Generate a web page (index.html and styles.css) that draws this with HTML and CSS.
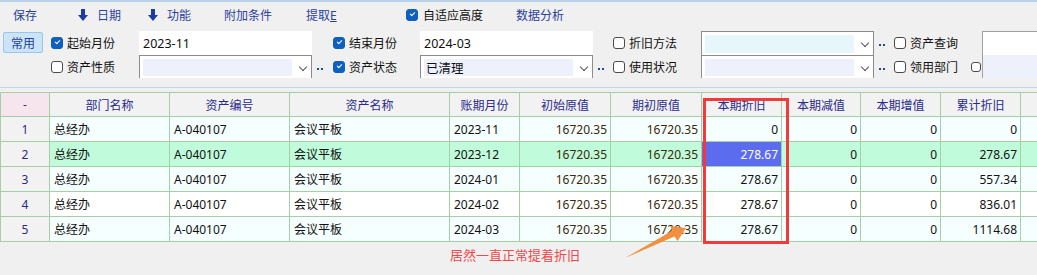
FILE: index.html
```html
<!DOCTYPE html>
<html lang="zh-CN">
<head>
    <meta charset="UTF-8">
    <title>资产折旧明细</title>
    <link rel="stylesheet" href="styles.css">
</head>
<body>
    <div class="top-line"></div>

    <div class="toolbar">
        <span class="tb w-save">保存</span>
        <span class="tb w-date"><svg class="down" viewBox="0 0 10 12"><path d="M3 0h4v6h3l-5 6-5-6h3z"/></svg>日期</span>
        <span class="tb w-func"><svg class="down" viewBox="0 0 10 12"><path d="M3 0h4v6h3l-5 6-5-6h3z"/></svg>功能</span>
        <span class="tb w-extra">附加条件</span>
        <span class="tb w-fetch">提取<u>E</u></span>
        <span class="tb w-auto"><span class="cb on"></span><span class="dark">自适应高度</span></span>
        <span class="tb">数据分析</span>
    </div>

    <div class="filters">
        <div class="cell"><button class="common">常用</button></div>
        <div class="cell"><label class="chk"><span class="cb on"></span>起始月份</label></div>
        <div class="cell"><div class="field plain">2023-11</div></div>
        <div class="cell"></div>
        <div class="cell"><label class="chk"><span class="cb on"></span>结束月份</label></div>
        <div class="cell"><div class="field plain">2024-03</div></div>
        <div class="cell"></div>
        <div class="cell"><label class="chk"><span class="cb"></span>折旧方法</label></div>
        <div class="cell"><div class="field combo"><span class="inner cyan"></span><span class="chev"></span></div></div>
        <div class="cell"><span class="dots"></span></div>
        <div class="cell"><label class="chk"><span class="cb"></span>资产查询</label></div>
        <div class="cell"></div>
        <div class="cell"><div class="field plain edge"></div></div>

        <div class="cell"></div>
        <div class="cell"><label class="chk"><span class="cb"></span>资产性质</label></div>
        <div class="cell"><div class="field combo"><span class="inner"></span><span class="chev"></span></div></div>
        <div class="cell"><span class="dots"></span></div>
        <div class="cell"><label class="chk"><span class="cb on"></span>资产状态</label></div>
        <div class="cell"><div class="field combo"><span class="inner">已清理</span><span class="chev"></span></div></div>
        <div class="cell"><span class="dots"></span></div>
        <div class="cell"><label class="chk"><span class="cb"></span>使用状况</label></div>
        <div class="cell"><div class="field combo"><span class="inner"></span><span class="chev"></span></div></div>
        <div class="cell"><span class="dots"></span></div>
        <div class="cell"><label class="chk"><span class="cb"></span>领用部门</label></div>
        <div class="cell"><span class="cb small"></span></div>
        <div class="cell"><div class="field plain edge lilac"></div></div>
    </div>

    <div class="sep-line"></div>

    <div class="grid-wrap">
        <table class="grid">
            <colgroup>
                <col style="width:49px">
                <col style="width:120px">
                <col style="width:120px">
                <col style="width:160px">
                <col style="width:70px">
                <col style="width:91px">
                <col style="width:91px">
                <col style="width:80px">
                <col style="width:79px">
                <col style="width:80px">
                <col style="width:80px">
                <col style="width:40px">
            </colgroup>
            <thead>
                <tr>
                    <th class="corner">-</th>
                    <th>部门名称</th>
                    <th>资产编号</th>
                    <th>资产名称</th>
                    <th>账期月份</th>
                    <th>初始原值</th>
                    <th>期初原值</th>
                    <th>本期折旧</th>
                    <th>本期减值</th>
                    <th>本期增值</th>
                    <th>累计折旧</th>
                    <th></th>
                </tr>
            </thead>
            <tbody>
                <tr class="odd">
                    <td class="no">1</td><td>总经办</td><td>A-040107</td><td>会议平板</td><td>2023-11</td>
                    <td class="num brown">16720.35</td><td class="num brown">16720.35</td><td class="num">0</td>
                    <td class="num">0</td><td class="num">0</td><td class="num">0</td><td></td>
                </tr>
                <tr class="current">
                    <td class="no">2</td><td>总经办</td><td>A-040107</td><td>会议平板</td><td>2023-12</td>
                    <td class="num brown">16720.35</td><td class="num brown">16720.35</td><td class="num focus">278.67</td>
                    <td class="num">0</td><td class="num">0</td><td class="num">278.67</td><td></td>
                </tr>
                <tr class="odd">
                    <td class="no">3</td><td>总经办</td><td>A-040107</td><td>会议平板</td><td>2024-01</td>
                    <td class="num brown">16720.35</td><td class="num brown">16720.35</td><td class="num">278.67</td>
                    <td class="num">0</td><td class="num">0</td><td class="num">557.34</td><td></td>
                </tr>
                <tr>
                    <td class="no">4</td><td>总经办</td><td>A-040107</td><td>会议平板</td><td>2024-02</td>
                    <td class="num brown">16720.35</td><td class="num brown">16720.35</td><td class="num">278.67</td>
                    <td class="num">0</td><td class="num">0</td><td class="num">836.01</td><td></td>
                </tr>
                <tr class="odd">
                    <td class="no">5</td><td>总经办</td><td>A-040107</td><td>会议平板</td><td>2024-03</td>
                    <td class="num brown">16720.35</td><td class="num brown">16720.35</td><td class="num">278.67</td>
                    <td class="num">0</td><td class="num">0</td><td class="num">1114.68</td><td></td>
                </tr>
            </tbody>
        </table>
    </div>

    <!-- пометки поверх скриншота -->
    <div class="mark-box"></div>
    <div class="mark-text">居然一直正常提着折旧</div>
    <svg class="mark-arrow" width="1037" height="275" viewBox="0 0 1037 275">
        <polygon points="625,258 674.5,236.5 677.5,241 686,228 670,226 672.5,230.5" fill="#f39040"/>
    </svg>
</body>
</html>
```

FILE: styles.css
```css
body {
    margin: 0;
    width: 1037px;
    height: 275px;
    overflow: hidden;
    position: relative;
    background: #f0f0f0;
    font-family: "Noto Sans", "Noto Sans CJK SC", sans-serif;
    font-size: 12px;
    color: #111;
}
.top-line {
    height: 2px;
    background: #b9d1ea;
}

/* панель кнопок */
.toolbar {
    display: flex;
    align-items: center;
    height: 26px;
    padding-left: 13px;
    color: #2b3f9e;
}
.tb {
    display: flex;
    align-items: center;
    white-space: nowrap;
}
.tb u {
    text-decoration: underline;
}
.w-save { width: 65px; }
.w-date { width: 70px; }
.w-func { width: 76px; }
.w-extra { width: 82px; }
.w-fetch { width: 100px; }
.w-auto { width: 110px; }
.down {
    width: 10px;
    height: 12px;
    margin-right: 9px;
    fill: #1b3ca0;
}
.dark {
    color: #111;
    margin-left: 5px;
}

/* чекбоксы */
.cb {
    display: inline-block;
    box-sizing: border-box;
    width: 12px;
    height: 12px;
    border: 1px solid #4a4a4a;
    border-radius: 3px;
    background: #fff;
    position: relative;
    flex: none;
}
.cb.on {
    background: #0f5fbf;
    border-color: #0f5fbf;
}
.cb.on::after {
    content: "";
    position: absolute;
    left: 3px;
    top: 2px;
    width: 4px;
    height: 2px;
    border-left: 1px solid #fff;
    border-bottom: 1px solid #fff;
    transform: rotate(-45deg);
}
.cb.small {
    width: 10px;
    height: 10px;
    margin-left: 0;
}

/* фильтры */
.filters {
    display: grid;
    grid-template-columns: 40px 96px 173px 21px 87px 173px 20px 88px 173px 20px 77px 11px 100px;
    grid-template-rows: 24px 23px;
    padding: 3px 0 0 3px;
}
.cell {
    display: flex;
    align-items: center;
    min-width: 0;
}
.common {
    width: 40px;
    height: 21px;
    margin-top: -1px;
    padding: 0;
    border: 1px solid #99c6ec;
    border-radius: 2px;
    background: #cce4f7;
    color: #1e3f9a;
    font-family: inherit;
    font-size: 12px;
}
.chk {
    display: flex;
    align-items: center;
    gap: 4px;
    margin-left: 8px;
    white-space: nowrap;
}
.filters .cell:nth-child(13n+5) .chk,
.filters .cell:nth-child(13n+8) .chk,
.filters .cell:nth-child(13n+11) .chk {
    margin-left: 0;
}
.field {
    box-sizing: border-box;
    width: 173px;
    height: 100%;
    display: flex;
    align-items: center;
    background: #fff;
}
.field.plain {
    padding-left: 4px;
    font-size: 12.5px;
}
.field.edge {
    width: 100px;
    border-left: 1px solid #a0a0a0;
    border-top: 1px solid #a0a0a0;
}
.field.edge.lilac {
    background: #eef0fc;
    border-top: none;
}
.combo {
    border: 1px solid #8c8c8c;
    border-bottom: none;
    padding: 3px 0 2px 3px;
    align-items: stretch;
}
.combo .inner {
    flex: 1;
    background: #eef0fc;
    display: flex;
    align-items: center;
    padding-left: 2px;
    font-size: 12.5px;
}
.combo .inner.cyan {
    background: #e6f6fb;
}
.chev {
    width: 19px;
    position: relative;
}
.chev::after {
    content: "";
    position: absolute;
    left: 8px;
    top: 5px;
    width: 5px;
    height: 5px;
    border-right: 1px solid #555;
    border-bottom: 1px solid #555;
    transform: rotate(45deg);
}
.dots {
    margin-left: 5px;
    margin-top: 4px;
    width: 6px;
    height: 2px;
    background: repeating-linear-gradient(90deg, #1d4aa8 0 2px, transparent 2px 4px);
}
.sep-line {
    height: 1px;
    margin-top: 9px;
    background: #c2d7ee;
}

/* таблица */
.grid-wrap {
    padding-top: 4px;
}
.grid {
    border-collapse: collapse;
    table-layout: fixed;
    width: 1060px;
}
.grid th,
.grid td {
    border: 1px solid #a6cfa6;
    padding: 0 4px;
    white-space: nowrap;
    overflow: hidden;
}
.grid th {
    height: 23px;
    background: #f2f2f2;
    color: #2a2a8c;
    font-weight: normal;
    text-align: center;
}
.grid th.corner {
    background: #f7e5ee;
}
.grid td {
    height: 24px;
    background: #fff;
}
.grid tr.odd td {
    background: #f5ffff;
}
.grid tr.current td {
    background: #c0fcdc;
}
.grid td.no {
    background: #f2f2f2 !important;
    color: #2a2a8c;
    text-align: center;
}
.grid td.num {
    text-align: right;
    padding-right: 3px;
}
.grid td.brown {
    color: #3a2808;
}
.grid td.focus {
    background: #5b6cee !important;
    color: #fff;
}

/* пометки */
.mark-box {
    position: absolute;
    left: 703px;
    top: 98px;
    width: 80px;
    height: 140px;
    border: 3px solid #f23a3a;
}
.mark-text {
    position: absolute;
    left: 450px;
    top: 245px;
    font-size: 13px;
    color: #f2484a;
    font-family: "Noto Sans CJK SC", sans-serif;
}
.mark-arrow {
    position: absolute;
    left: 0;
    top: 0;
}
```
